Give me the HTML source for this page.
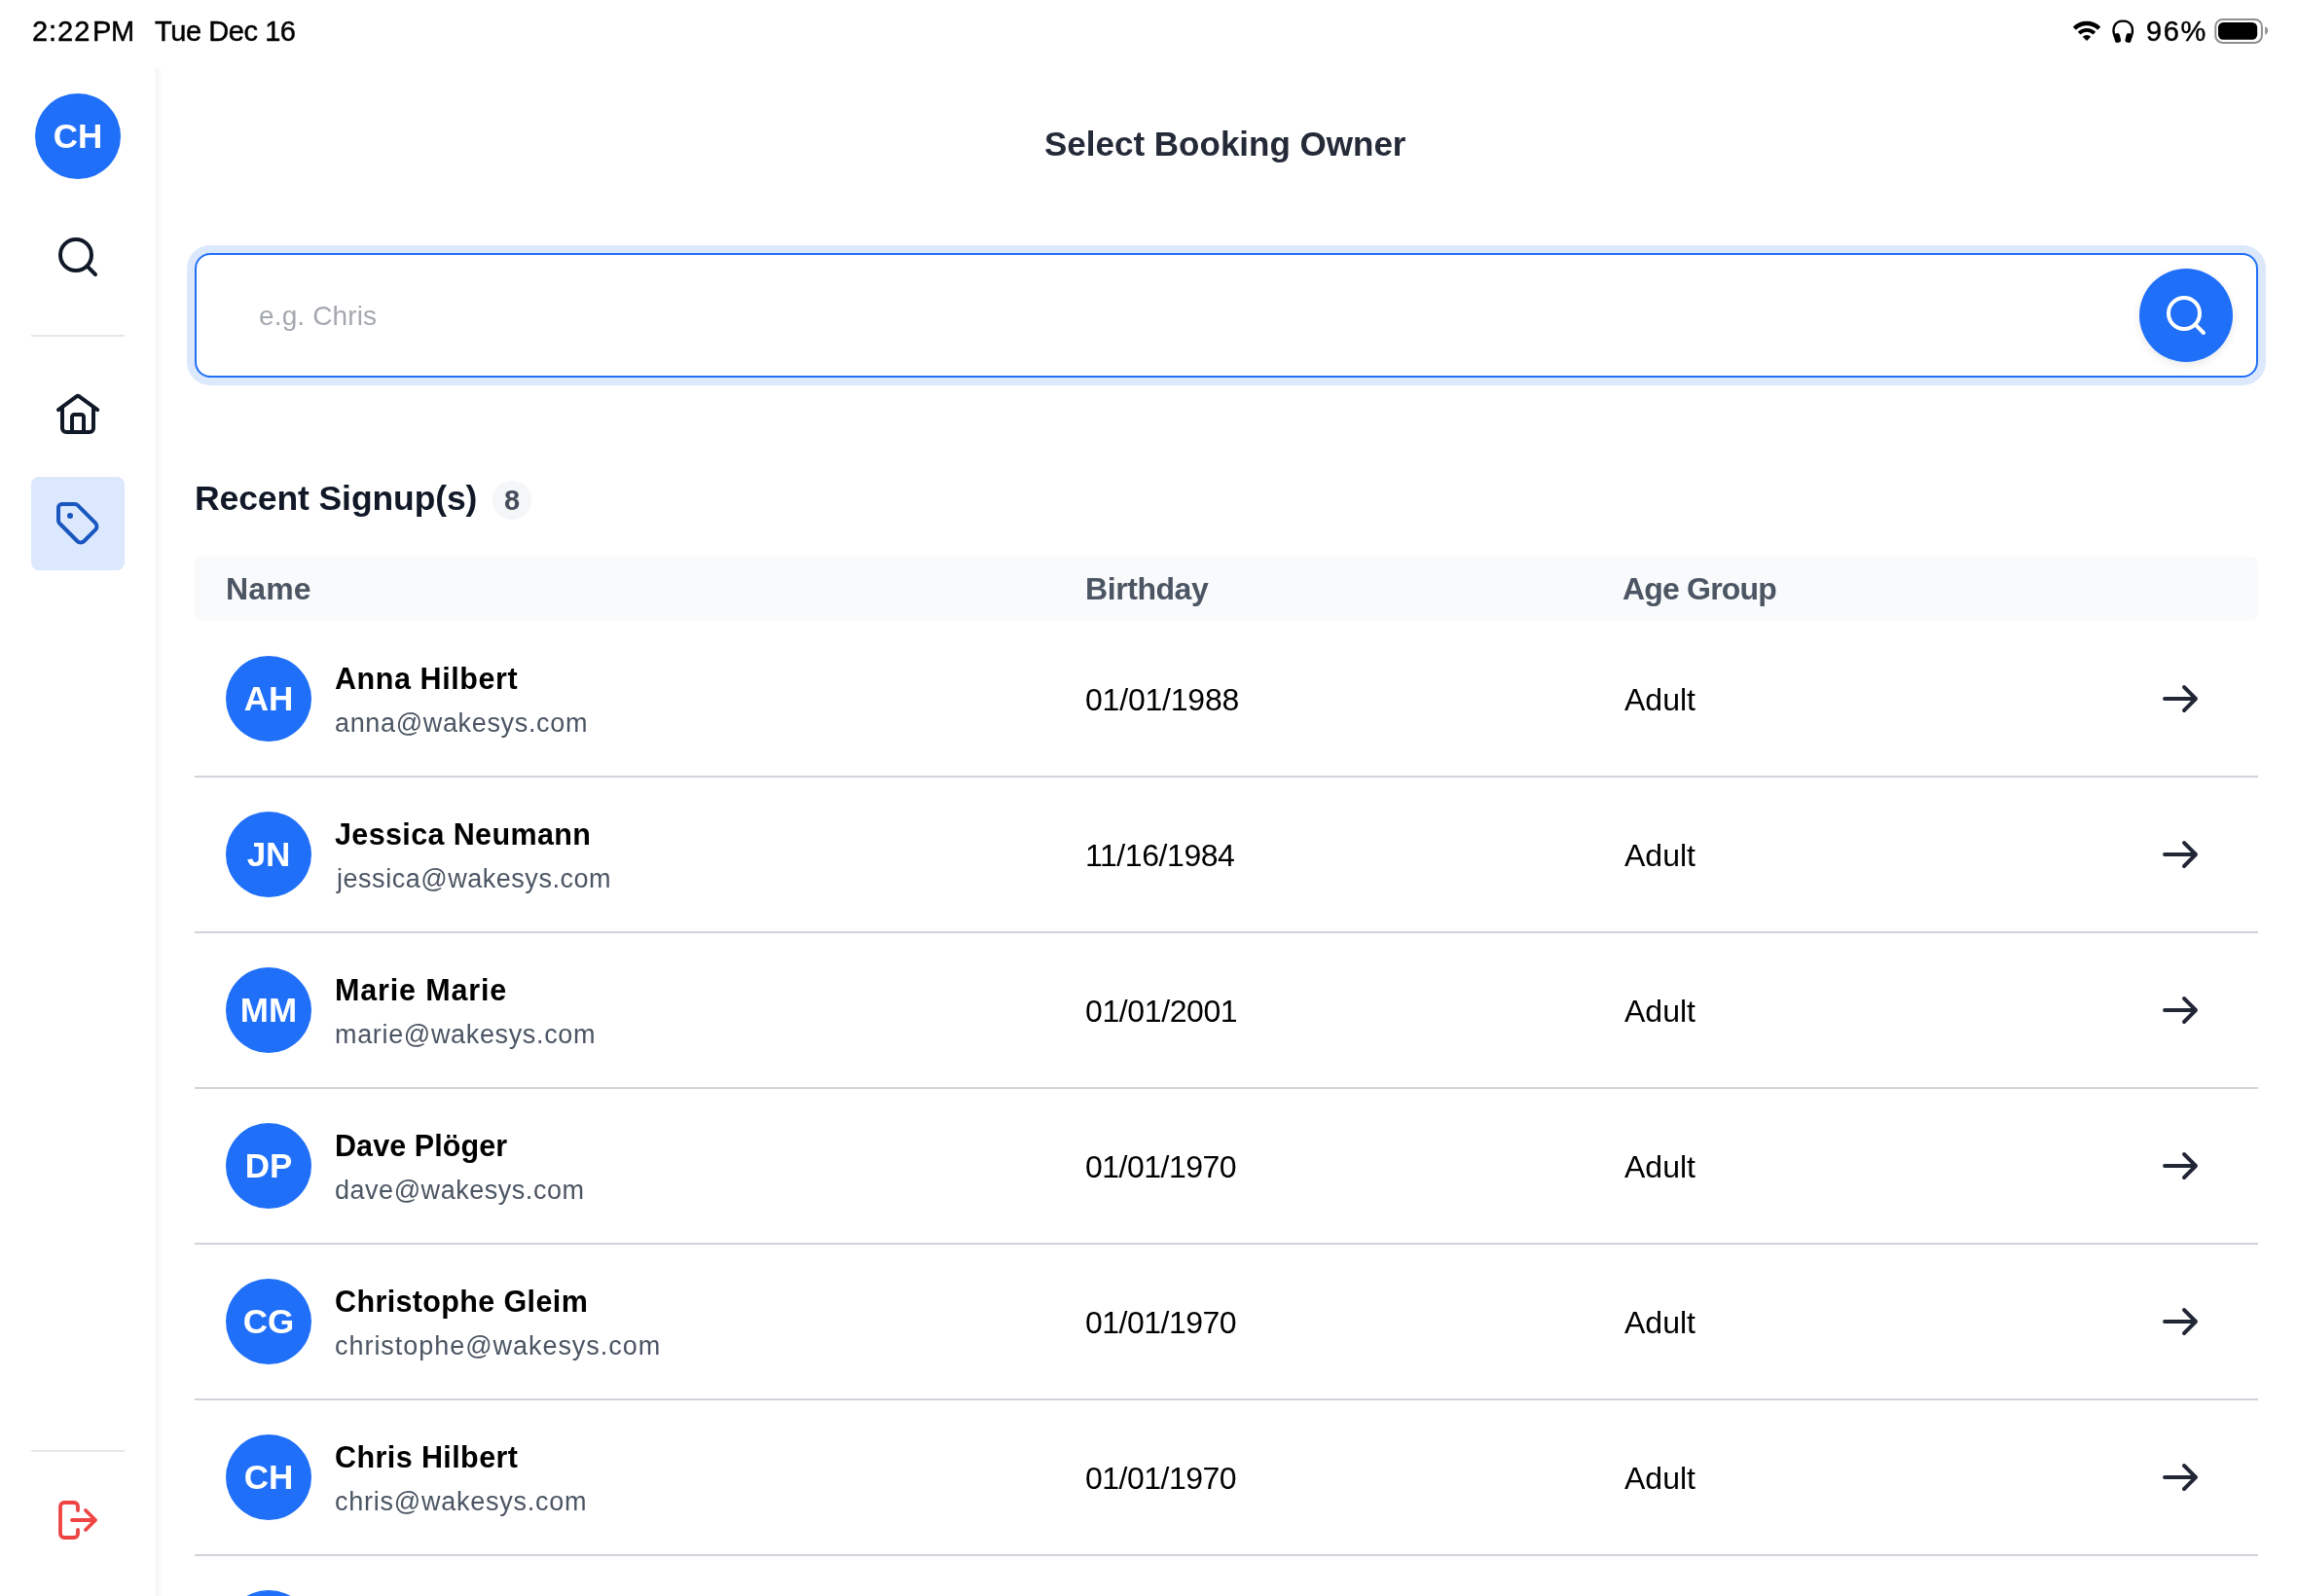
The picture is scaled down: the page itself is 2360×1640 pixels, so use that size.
<!DOCTYPE html>
<html lang="en">
<head>
<meta charset="utf-8">
<title>Select Booking Owner</title>
<style>
*{box-sizing:border-box;margin:0;padding:0}
html,body{width:2360px;height:1640px;overflow:hidden;background:#fff}
body{font-family:"Liberation Sans",sans-serif;position:relative;color:#000}
#app{position:absolute;left:0;top:0;width:2360px;height:1640px;overflow:hidden;will-change:transform}
.abs{position:absolute;white-space:nowrap;line-height:1}
/* status bar */
.st{font-size:29px;color:#000;top:18px;-webkit-text-stroke:.45px #000}
/* sidebar */
#side{position:absolute;left:160px;top:70px;width:6px;height:1570px;background:linear-gradient(to right,#eeeff1 0,#f6f7f9 1px,#f8f9fb 3px,#fcfcfd 5px,#fff 6px)}
.av{position:absolute;width:88px;height:88px;border-radius:50%;background:#1f6ff9;color:#fff;font-weight:bold;text-align:center;white-space:nowrap}
.hr{position:absolute;left:32px;width:96px;height:2px;background:#e5e7eb}
#tagbg{position:absolute;left:32px;top:490px;width:96px;height:96px;border-radius:8px;background:#dbe8fd}
svg{position:absolute;overflow:visible}
/* main */
#title{left:1073px;top:130px;font-size:35px;letter-spacing:0;font-weight:bold;color:#252a39}
#search{position:absolute;left:200px;top:260px;width:2120px;height:128px;border:2px solid #1f6ff9;border-radius:16px;box-shadow:0 0 0 8px #dce8fc;background:#fff}
#ph{left:266px;top:311px;font-size:28px;letter-spacing:.14px;color:#a4a8af}
#sbtn{position:absolute;left:2198px;top:276px;width:96px;height:96px;border-radius:50%;background:#1f6ff9;box-shadow:0 3px 9px rgba(0,0,0,.09)}
#h2{left:200px;top:495px;font-size:35.5px;letter-spacing:-.1px;font-weight:bold;color:#111827}
#badge{position:absolute;left:506px;top:494px;width:40px;height:40px;border-radius:50%;background:#f5f6f8;color:#464d5b;font-weight:bold;font-size:29px;text-align:center;line-height:40px}
#thead{position:absolute;left:200px;top:572px;width:2120px;height:66px;border-radius:8px;background:#f9fafb}
.th{font-size:32px;font-weight:bold;color:#4b5563;top:589px}
.row{position:absolute;left:200px;width:2120px;height:161px;border-bottom:2px solid #d0d3da}
.row .av{left:32px;top:36px;font-size:35px;line-height:88px}
.nm{left:144px;top:44px;font-size:30.5px;font-weight:bold;color:#000}
.em{left:144px;top:92px;font-size:27px;color:#4b5563}
.bd{left:915px;top:65px;font-size:32px;color:#000}
.ag{left:1469px;top:65px;font-size:32px;color:#000}
.row svg{left:2016px;top:56px}
</style>
</head>
<body>
<div id="app">
<!-- status bar -->
<div class="abs st" style="left:33px;letter-spacing:.94px">2:22</div><div class="abs st" style="left:95px;letter-spacing:-.4px">PM</div>
<div class="abs st" style="left:159px;letter-spacing:-.43px">Tue Dec 16</div>
<div class="abs st" style="left:2205px;letter-spacing:1.6px">96%</div>

<!-- sidebar -->
<div id="side"></div>
<div class="av" style="left:36px;top:96px;font-size:35px;line-height:88px">CH</div>
<div class="hr" style="top:344px"></div>
<div id="tagbg"></div>
<div class="hr" style="top:1490px"></div>

<!-- main -->
<div id="title" class="abs">Select Booking Owner</div>
<div id="search"></div>
<div id="ph" class="abs">e.g. Chris</div>
<div id="sbtn"></div>
<div id="h2" class="abs">Recent Signup(s)</div>
<div id="badge">8</div>
<div id="thead"></div>
<div class="abs th" style="left:232px;letter-spacing:.13px">Name</div>
<div class="abs th" style="left:1115px;letter-spacing:-.43px">Birthday</div>
<div class="abs th" style="left:1667px;letter-spacing:-.81px">Age Group</div>


<!-- status icons -->
<svg style="left:2120px;top:12px" width="80" height="40" viewBox="2120 12 80 40">
<g fill="none" stroke="#000" stroke-linecap="butt">
<path d="M2131.31 29.31A17.95 17.95 0 0 1 2156.69 29.31" stroke-width="4.4"/>
<path d="M2136.15 34.15A11.1 11.1 0 0 1 2151.85 34.15" stroke-width="3.9"/>
</g>
<path d="M2144 42L2139.76 37.76A6 6 0 0 1 2148.24 37.76Z" fill="#000"/>
<path d="M2173.2 38.5C2169.3 29.5 2172.3 21.6 2181.25 21.6C2190.2 21.6 2193.2 29.5 2189.3 38.5" fill="none" stroke="#000" stroke-width="2.4"/>
<rect x="2172.3" y="34.2" width="6.2" height="9.6" rx="2.6" fill="#000" transform="rotate(-14 2175.4 39)"/>
<rect x="2184" y="34.2" width="6.2" height="9.6" rx="2.6" fill="#000" transform="rotate(14 2187.1 39)"/>
</svg>
<svg style="left:2270px;top:12px" width="70" height="40" viewBox="2270 12 70 40">
<rect x="2276.3" y="20" width="47.6" height="23.9" rx="7.2" fill="none" stroke="#8e8e93" stroke-width="2"/>
<rect x="2279" y="23" width="40.2" height="17.7" rx="5.2" fill="#000"/>
<path d="M2327.2 27.3C2331.2 28.6 2331.2 34.4 2327.2 35.7Z" fill="#8e8e93"/>
</svg>
<!-- sidebar icons -->
<svg style="left:56px;top:240px" width="48" height="48" viewBox="0 0 24 24" fill="none" stroke="#111827" stroke-width="2" stroke-linecap="round" stroke-linejoin="round"><circle cx="11" cy="11" r="8"/><path d="m21 21-4.3-4.3"/></svg>
<svg style="left:56px;top:400px" width="48" height="48" viewBox="0 0 48 48" fill="none" stroke="#111827" stroke-width="4" stroke-linecap="round" stroke-linejoin="round"><path d="M4 21.1L22.6 7.45Q24 6.4 25.4 7.45L44.2 21.1"/><path d="M8 18.5V40a4 4 0 0 0 4 4H36a4 4 0 0 0 4-4V18.5"/><path d="M18 44V28.5a2.5 2.5 0 0 1 2.5-2.5h7a2.5 2.5 0 0 1 2.5 2.5V44"/></svg>
<svg style="left:56px;top:514px" width="48" height="48" viewBox="0 0 24 24" fill="none" stroke="#1956c0" stroke-width="2" stroke-linecap="round" stroke-linejoin="round"><path d="M2.000 3.800A1.8 1.8 0 0 1 3.800 2.000L10.472 2.000A2 2 0 0 1 11.886 2.586L20.982 11.682A2.5 2.5 0 0 1 20.982 15.218L15.218 20.982A2.5 2.5 0 0 1 11.682 20.982L2.586 11.886A2 2 0 0 1 2.000 10.472Z"/><circle cx="8" cy="8" r="1.5" fill="#1956c0" stroke="none"/></svg>
<svg style="left:56px;top:1538px" width="48" height="48" viewBox="0 0 24 24" fill="none" stroke="#ef4444" stroke-width="1.9" stroke-linecap="round" stroke-linejoin="round"><path d="M12 7V5a2 2 0 0 0-2-2H5a2 2 0 0 0-2 2v14a2 2 0 0 0 2 2h5a2 2 0 0 0 2-2V17"/><path d="M9 12h12M16 7l5 5-5 5"/></svg>
<!-- search button icon -->
<svg style="left:2222px;top:300px" width="48" height="48" viewBox="0 0 24 24" fill="none" stroke="#fff" stroke-width="2" stroke-linecap="round" stroke-linejoin="round"><circle cx="11" cy="11" r="8"/><path d="m21 21-4.3-4.3"/></svg>
<div id="rows">
<div class="row" style="top:638px"><div class="av">AH</div><div class="abs nm" style="letter-spacing:0.58px">Anna Hilbert</div><div class="abs em" style="letter-spacing:0.66px">anna@wakesys.com</div><div class="abs bd" style="letter-spacing:-0.2px">01/01/1988</div><div class="abs ag">Adult</div><svg width="48" height="48" viewBox="0 0 48 48" fill="none" stroke="#222736" stroke-width="3.9" stroke-linecap="round" stroke-linejoin="round"><path d="M8 24H40M28 12L40 24L28 36"/></svg></div>
<div class="row" style="top:798px"><div class="av">JN</div><div class="abs nm" style="letter-spacing:0.37px">Jessica Neumann</div><div class="abs em" style="letter-spacing:0.53px;left:146px">jessica@wakesys.com</div><div class="abs bd" style="letter-spacing:-0.43px">11/16/1984</div><div class="abs ag">Adult</div><svg width="48" height="48" viewBox="0 0 48 48" fill="none" stroke="#222736" stroke-width="3.9" stroke-linecap="round" stroke-linejoin="round"><path d="M8 24H40M28 12L40 24L28 36"/></svg></div>
<div class="row" style="top:958px"><div class="av">MM</div><div class="abs nm" style="letter-spacing:0.85px">Marie Marie</div><div class="abs em" style="letter-spacing:0.66px">marie@wakesys.com</div><div class="abs bd" style="letter-spacing:-0.39px">01/01/2001</div><div class="abs ag">Adult</div><svg width="48" height="48" viewBox="0 0 48 48" fill="none" stroke="#222736" stroke-width="3.9" stroke-linecap="round" stroke-linejoin="round"><path d="M8 24H40M28 12L40 24L28 36"/></svg></div>
<div class="row" style="top:1118px"><div class="av">DP</div><div class="abs nm" style="letter-spacing:0.08px">Dave Plöger</div><div class="abs em" style="letter-spacing:0.53px">dave@wakesys.com</div><div class="abs bd" style="letter-spacing:-0.51px">01/01/1970</div><div class="abs ag">Adult</div><svg width="48" height="48" viewBox="0 0 48 48" fill="none" stroke="#222736" stroke-width="3.9" stroke-linecap="round" stroke-linejoin="round"><path d="M8 24H40M28 12L40 24L28 36"/></svg></div>
<div class="row" style="top:1278px"><div class="av">CG</div><div class="abs nm" style="letter-spacing:0.37px">Christophe Gleim</div><div class="abs em" style="letter-spacing:0.96px">christophe@wakesys.com</div><div class="abs bd" style="letter-spacing:-0.51px">01/01/1970</div><div class="abs ag">Adult</div><svg width="48" height="48" viewBox="0 0 48 48" fill="none" stroke="#222736" stroke-width="3.9" stroke-linecap="round" stroke-linejoin="round"><path d="M8 24H40M28 12L40 24L28 36"/></svg></div>
<div class="row" style="top:1438px"><div class="av">CH</div><div class="abs nm" style="letter-spacing:0.41px">Chris Hilbert</div><div class="abs em" style="letter-spacing:0.75px">chris@wakesys.com</div><div class="abs bd" style="letter-spacing:-0.51px">01/01/1970</div><div class="abs ag">Adult</div><svg width="48" height="48" viewBox="0 0 48 48" fill="none" stroke="#222736" stroke-width="3.9" stroke-linecap="round" stroke-linejoin="round"><path d="M8 24H40M28 12L40 24L28 36"/></svg></div>
<div class="row" style="top:1598px;border:0"><div class="av"></div></div>
</div><!--endrows-->
</div>
</body>
</html>
